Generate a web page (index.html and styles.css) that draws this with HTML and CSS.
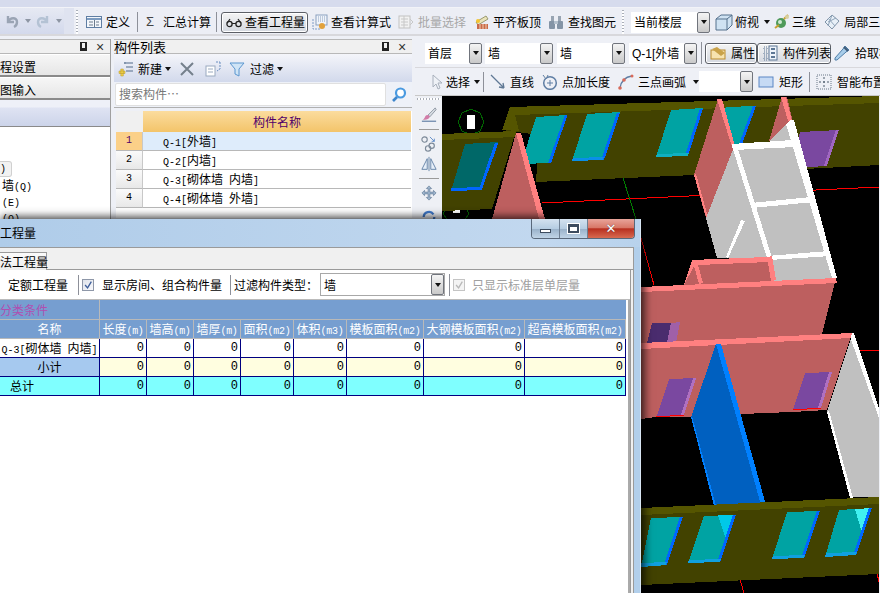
FILE: index.html
```html
<!DOCTYPE html>
<html lang="zh">
<head>
<meta charset="utf-8">
<title>工程量</title>
<link rel="stylesheet" href="styles.css">
</head>
<body>
<div class="app">
  <div class="menubar"><span class="menutext">文件 编辑 工程 楼层 构件 绘图 修改 视图 工具 云应用 帮助 版本号 新建变更 广小二</span></div>

  <div class="toolbar main-tb">
    <div class="quick">
      <svg class="ic" viewBox="0 0 16 16"><path d="M4 3v6h6M4 9c2-5 9-5 9 0 0 2-1 4-3 5" fill="none" stroke="#9aa4b4" stroke-width="2.4"/></svg>
      <i class="caret gray c1"></i>
      <svg class="ic" viewBox="0 0 16 16"><path d="M12 3v6H6M12 9c-2-5-9-5-9 0 0 2 1 4 3 5" fill="none" stroke="#b4c2d4" stroke-width="2.4"/></svg>
      <i class="caret gray c1"></i>
    </div>
    <i class="grip g1"></i>
    <div class="tool t-def">
      <svg class="ic" viewBox="0 0 16 16"><rect x=".5" y="2.500" width="15" height="11" fill="#f4f7fb" stroke="#5f7ea3"/><path d="M1 5h14" stroke="#7d9cc0" stroke-width="2"/><path d="M3 8h4M3 11h4M10 8h3M10 11h3M8.500 6v7" stroke="#6b7a8c"/></svg>
      <span>定义</span>
    </div>
    <i class="sep s1"></i>
    <div class="tool t-sum"><span class="sigma">Σ</span><span>汇总计算</span></div>
    <i class="sep s2"></i>
    <div class="tool active">
      <svg class="ic" viewBox="0 0 16 16"><circle cx="3.500" cy="10" r="2.600" fill="none" stroke="#222" stroke-width="1.300"/><circle cx="12.500" cy="10" r="2.600" fill="none" stroke="#222" stroke-width="1.300"/><path d="M6 9.500h4M1.200 9L4 5M14.800 9L12 5" fill="none" stroke="#222" stroke-width="1.200"/></svg>
      <span>查看工程量</span>
    </div>
    <div class="tool t-calc">
      <svg class="ic" viewBox="0 0 16 16"><rect x="4" y="1" width="11" height="10" fill="#f0f4fa" stroke="#8aa0c0"/><path d="M6 3h7M6 5h7M6 7h7" stroke="#8aa0c0" stroke-dasharray="1 1"/><path d="M1 5v10h8" fill="none" stroke="#7f9cc6" stroke-dasharray="2 1"/><circle cx="10" cy="12" r="3" fill="#e2a23c"/></svg>
      <span>查看计算式</span>
    </div>
    <div class="tool t-batch disabled">
      <svg class="ic" viewBox="0 0 16 16"><rect x="1" y="2" width="11" height="12" fill="#f2f2f2" stroke="#c2c2c2"/><path d="M3 5h7M3 8h7M3 11h7M6 2v12M12 5l3 3-3 3" fill="none" stroke="#c8c8c8"/></svg>
      <span>批量选择</span>
    </div>
    <div class="tool t-flat">
      <svg class="ic" viewBox="0 0 16 16"><path d="M2 8l10-6 2 3L4 11z" fill="#e9e3b9" stroke="#9a9a70"/><rect x="3" y="10" width="11" height="5" fill="#c96a4a"/><path d="M6 10v5M9 10v5M12 10v5" stroke="#f0d0b0"/><circle cx="4" cy="7" r="2" fill="#f4c430"/></svg>
      <span>平齐板顶</span>
    </div>
    <div class="tool t-find">
      <svg class="ic" viewBox="0 0 16 16"><path d="M3 2h3v5H3zM10 2h3v5h-3z" fill="#98a4b2"/><rect x="1" y="7" width="6" height="8" rx="1" fill="#8494a6"/><rect x="9" y="7" width="6" height="8" rx="1" fill="#8494a6"/><path d="M6 7h4v3H6z" fill="#b4c0cc"/></svg>
      <span>查找图元</span>
    </div>
    <i class="grip g2"></i>
    <div class="combo floor"><span class="val">当前楼层</span><b class="drop"><i class="caret"></i></b></div>
    <div class="tool t-top">
      <svg class="ic big" viewBox="0 0 18 18"><path d="M1 6l5-4h11v10l-5 5H1z" fill="#cfe2f2" stroke="#54708c"/><path d="M1 6h11v11M12 6l5-4" fill="none" stroke="#54708c"/></svg>
      <span>俯视</span><i class="caret c2"></i>
    </div>
    <div class="tool t-3d">
      <svg class="ic" viewBox="0 0 16 16"><circle cx="7" cy="9" r="5" fill="#4f9a5a"/><circle cx="6" cy="8" r="2" fill="#cfe8d2"/><path d="M1 14l4-3M10 5l4-4" stroke="#c8a030" stroke-width="2"/><circle cx="13" cy="3" r="2" fill="#d8d0a0"/></svg>
      <span>三维</span>
    </div>
    <div class="tool t-local">
      <svg class="ic" viewBox="0 0 16 16"><path d="M8 1l7 6-7 8-7-7z" fill="#e8f0f8" stroke="#7f93a8"/><path d="M4 4l7 8M8 1l-4 11M12 4l-8 4" stroke="#8fa3b8" fill="none"/></svg>
      <span>局部三维</span>
    </div>
  </div>

  <div class="workspace">
    <aside class="leftpanel">
      <div class="panelhead end"><i class="pin"></i><i class="close">×</i></div>
      <button class="navbtn">程设置</button>
      <button class="navbtn">图输入</button>
      <div class="band"></div>
      <div class="tree">
        <div class="tree-sel lat">)</div>
        <div class="tree-row">墙<span class="lat">(Q)</span></div>
        <div class="tree-row"><span class="lat">(E)</span></div>
        <div class="tree-row"><span class="lat">(O)</span></div>
      </div>
    </aside>

    <section class="listpanel">
      <div class="panelhead"><span class="paneltitle">构件列表</span><i class="pin push"></i><i class="close">×</i></div>
      <div class="listtools">
        <svg class="ic" viewBox="0 0 16 16"><path d="M8 2h7M8 6h7M8 10h7" stroke="#8294ad" stroke-width="1.300"/><rect x="6" y="1" width="2" height="2" fill="#8294ad"/><path d="M1 10h6v2.500H1z M2.800 8h2.500v7H2.800z" fill="#f1d24a" stroke="#b6942a" stroke-width=".5"/></svg>
        <span class="lt-new">新建</span><i class="caret c3"></i>
        <svg class="ic lt-x" viewBox="0 0 16 16"><path d="M2 2l12 12M14 2L2 14" stroke="#75808c" stroke-width="2"/></svg>
        <svg class="ic lt-copy" viewBox="0 0 16 16"><rect x="1" y="5" width="9" height="10" fill="#fff" stroke="#9aaabf"/><path d="M3 8h5M3 11h5" stroke="#9aaabf"/><path d="M11 1h4M15 1v7l-3 2" fill="none" stroke="#6a8ec0" stroke-dasharray="2 1"/></svg>
        <svg class="ic lt-filter" viewBox="0 0 16 16"><path d="M1 2h14L10 8v7l-4-2V8z" fill="#cfe4f6" stroke="#5b96cf"/></svg>
        <span class="lt-flt">过滤</span><i class="caret c3"></i>
      </div>
      <div class="searchrow">
        <div class="search">搜索构件…</div>
        <svg class="ic searchic" viewBox="0 0 16 16"><circle cx="9.500" cy="6" r="4.500" fill="#fff" stroke="#4a9ae0" stroke-width="2.200"/><path d="M6 10l-4 4" stroke="#3e86cc" stroke-width="2.600"/></svg>
      </div>
      <div class="listtable">
        <div class="lt-corner"></div><div class="lt-head">构件名称</div>
        <div class="lt-num sel">1</div><div class="lt-name sel"><span class="lat">Q-1[</span>外墙<span class="lat">]</span></div>
        <div class="lt-num">2</div><div class="lt-name"><span class="lat">Q-2[</span>内墙<span class="lat">]</span></div>
        <div class="lt-num">3</div><div class="lt-name"><span class="lat">Q-3[</span>砌体墙<span class="lat"> </span>内墙<span class="lat">]</span></div>
        <div class="lt-num">4</div><div class="lt-name"><span class="lat">Q-4[</span>砌体墙<span class="lat"> </span>外墙<span class="lat">]</span></div>
      </div>
    </section>

    <section class="viewarea">
      <div class="toolbar row2">
        <div class="combo c-floor"><span class="val">首层</span><b class="drop"><i class="caret"></i></b></div>
        <div class="combo c-wall"><span class="val">墙</span><b class="drop"><i class="caret"></i></b></div>
        <div class="combo c-wall"><span class="val">墙</span><b class="drop"><i class="caret"></i></b></div>
        <div class="combo c-wall"><span class="val"><span class="lat2">Q-1[</span>外墙</span><b class="drop"><i class="caret"></i></b></div>
        <i class="sep s3"></i>
        <div class="tool active a-prop">
          <svg class="ic" viewBox="0 0 16 16"><rect x="1" y="5" width="14" height="9" fill="#f7e3b0" stroke="#b98a2f"/><path d="M2 4l5-2 8 6-4 3z" fill="#c9a24a"/></svg>
          <span>属性</span>
        </div>
        <div class="tool active a-list">
          <svg class="ic" viewBox="0 0 16 16"><path d="M2 2h3v3H2zM2 7h3v3H2zM2 12h3v3H2z" fill="none" stroke="#5d7795" stroke-dasharray="1 1"/><rect x="7" y="1" width="8" height="14" fill="#eef3fa" stroke="#5d7795"/><path d="M9 4h4M9 8h4M9 12h4" stroke="#5d7795" stroke-width="2"/></svg>
          <span>构件列表</span>
        </div>
        <div class="tool a-pick">
          <svg class="ic" viewBox="0 0 16 16"><path d="M11 1l4 4-3 2-9 8H1v-2l8-9z" fill="#a8cdea" stroke="#4f7ea8"/><path d="M10 2l4 4" stroke="#3d5a78" stroke-width="2"/></svg>
          <span>拾取构件</span>
        </div>
      </div>
      <div class="toolbar row3">
        <svg class="ic r-cursor" viewBox="0 0 16 16"><path d="M4 1v12l3-3 2 5 2-1-2-5h4z" fill="#eef1f6" stroke="#a8b0bc"/></svg>
        <span class="r-sel">选择</span><i class="caret c4"></i>
        <i class="sep s4"></i>
        <div class="tool r-t1">
          <svg class="ic" viewBox="0 0 16 16"><path d="M1 1l13 13M14 14l-5-1M14 14l-1-5" fill="none" stroke="#5f7894" stroke-width="1.300"/></svg>
          <span>直线</span>
        </div>
        <div class="tool r-t2">
          <svg class="ic" viewBox="0 0 16 16"><circle cx="8" cy="9" r="6.300" fill="none" stroke="#5f7ea4" stroke-width="1.500"/><path d="M8 6v6M5 9h6" stroke="#5f7ea4"/><path d="M1 1l3 4 2-4" fill="#f0f0f0" stroke="#5f7ea4"/></svg>
          <span>点加长度</span>
        </div>
        <div class="tool r-t3">
          <svg class="ic" viewBox="0 0 16 16"><path d="M2 14C3 7 7 3 14 2" fill="none" stroke="#5f7ea4" stroke-width="1.300"/><circle cx="2" cy="14" r="1.800" fill="#d86a5a"/><circle cx="6" cy="6" r="1.800" fill="#d86a5a"/><circle cx="14" cy="2" r="1.500" fill="#d86a5a"/></svg>
          <span>三点画弧</span><i class="caret c5"></i>
        </div>
        <div class="combo c-blank"><span class="val"></span><b class="drop"><i class="caret"></i></b></div>
        <div class="tool r-t4">
          <svg class="ic" viewBox="0 0 16 16"><rect x="1" y="3" width="14" height="10" fill="#c6daf4" stroke="#5a86c4"/></svg>
          <span>矩形</span>
        </div>
        <i class="sep s5"></i>
        <div class="tool r-t5">
          <svg class="ic" viewBox="0 0 16 16"><rect x="1" y="1" width="14" height="14" fill="none" stroke="#6a7888" stroke-dasharray="1 1"/><path d="M8 3v10M3 8h10" stroke="#4a5a6a" stroke-dasharray="2 2"/></svg>
          <span>智能布置</span>
        </div>
      </div>

      <div class="stage">
        <div class="sidetools">
          <i class="grip-h"></i>
          <svg class="ic" viewBox="0 0 18 18"><path d="M1 16h16" stroke="#5f7ea4" stroke-width="1.300"/><path d="M16 1L8 9l2 2 7-8z" fill="#d8dde4" stroke="#8a939e"/><path d="M5 10c2-2 4-1 5 1-1 3-5 4-8 3 2-1 2-2 3-4z" fill="#d27ca8"/></svg>
          <i class="side-sep"></i>
          <svg class="ic" viewBox="0 0 18 18"><circle cx="4" cy="4" r="3" fill="none" stroke="#7d8a99" stroke-width="1.300"/><circle cx="12" cy="11" r="3" fill="none" stroke="#7d8a99" stroke-width="1.300"/><circle cx="8" cy="14" r="3" fill="none" stroke="#7d8a99" stroke-width="1.300"/><path d="M10 1l5 5M15 3v3h-3" fill="none" stroke="#5a86c4"/></svg>
          <svg class="ic" viewBox="0 0 18 18"><path d="M9 1v16" stroke="#5f7ea4"/><path d="M7 3v12H1zM11 3v12h6z" fill="#e6eef8" stroke="#5f7ea4"/></svg>
          <i class="side-sep"></i>
          <svg class="ic" viewBox="0 0 18 18"><path d="M9 1l3 3h-2v4h4V6l3 3-3 3v-2h-4v4h2l-3 3-3-3h2v-4H4v2L1 9l3-3v2h4V4H6z" fill="#9db4cc" stroke="#5f7894" stroke-width=".7"/></svg>
          <svg class="ic side-rot" viewBox="0 0 18 18"><path d="M3 9a6 6 0 0 1 11-3M15 9a6 6 0 0 1-11 3" fill="none" stroke="#3f78c8" stroke-width="2.500"/></svg>
        </div>

        <svg class="scene" viewBox="443 96 437 497" preserveAspectRatio="none">
          <g fill="none" stroke-width="1">
            <path d="M543 203L880 187M642 238L655 285M860 350H880M741 579L745 593M878 573L880 582" stroke="#ff0000"/>
            <path d="M624 178L637 219" stroke="#008000"/>
            <path d="M472 109l9 4 4 9-4 9-9 4-9-4-4-9 4-9zM457 202l9 4 4 8-4 5H448l-4-5 4-8z" stroke="#006400"/>
          </g>
          <rect x="468" y="115" width="8" height="14" fill="#fff"/>
          <rect x="454" y="210" width="7" height="3" fill="#fff"/>

          <path d="M503 130L511 107 880 96V165L695 175 537 182 540 135z" fill="#424200"/>
          <path d="M511 107L880 96V103L516 115z" fill="#555500"/>
          <path d="M503 130L511 107 516 115 520 131z" fill="#555500"/>
          <path d="M537 117L568 115 552 163 522 164z" fill="#00a3a3"/>
          <path d="M566 115h2.500L552 163h-3z" fill="#0066ff"/>
          <path d="M588 114L621 112 605 160 573 161z" fill="#00a3a3"/>
          <path d="M618 112.500h3L605 160h-3z" fill="#0066ff"/>
          <path d="M574 158l31-1-1 3-31 1z" fill="#0a8fe8"/>
          <path d="M672 110L704 108 689 156 657 157z" fill="#00a3a3"/>
          <path d="M701 108.500h3L689 156h-3z" fill="#0066ff"/>
          <path d="M658 154l32-1-1 3-32 1z" fill="#10b0c0"/>
          <path d="M727 107L757 106 742 147 710 150z" fill="#00a3a3"/>
          <path d="M754 106h3L742 147h-3z" fill="#0066ff"/>
          <path d="M801 132L840 130 828 166 790 168z" fill="#7a48a0"/>
          <path d="M837 130h3L828 166h-3z" fill="#a066c0"/>

          <path d="M443 134L517 131 493 209 443 211z" fill="#424200"/>
          <path d="M443 134L517 131 517 137 443 140z" fill="#555500"/>
          <path d="M466 144L499 142 483 189 452 191z" fill="#006868"/>
          <path d="M496 142.500h3.500L483 189h-3z" fill="#0066ff"/>
          <path d="M452 188l32-1-1 3-31 1z" fill="#0066ff"/>

          <path d="M517 133h5L546 219H493z" fill="#bd5f5f"/>
          <path d="M517 133h5L546 219h-6z" fill="#ff8080"/>

          <path d="M783 97L788 97 794 122 794 141 770 141z" fill="#bd5f5f"/>
          <path d="M782 97h5l6 24h-4z" fill="#ff8080"/>
          <path d="M719 99L695 175 707 218 735 147z" fill="#bd5f5f"/>
          <path d="M718 99h5L736 146 733 147zM695 175l2-1 12 43h-2z" fill="#ff8080"/>

          <path d="M770 141L792 120 797 141z" fill="#c0c0c0"/>
          <path d="M735 147L707 218 718 258 772 258z" fill="#c0c0c0"/>
          <path d="M735 147L793 140 838 278 772 284z" fill="#c0c0c0"/>
          <path d="M733 144L793 140 796 147 735 150z" fill="#fff"/>
          <path d="M792 120L795 120 838 278 833 278 787 124z" fill="#fff"/>
          <path d="M733 146L738 146 773 258 768 258z" fill="#fff"/>
          <path d="M752 203L812 197 815 202 753 208z" fill="#fff"/>
          <path d="M768 256L830 251 832 256 770 260z" fill="#fff"/>
          <path d="M742 220L746 221 729 258 727 257z" fill="#fff"/>

          <path d="M685 285L693 260 768 257 775 281z" fill="#bd5f5f"/>
          <path d="M685 285L693 260 768 257 770 262 699 265 704 283 700 284 695 266z" fill="#ff8080"/>
          <path d="M768 257L773 256 777 280 772 281z" fill="#ff8080"/>

          <path d="M642 287L837 278 822 338 642 345z" fill="#bd5f5f"/>
          <path d="M642 287L837 278 838 283 642 292z" fill="#ff8080"/>
          <path d="M653 323L672 323 668 343 648 343z" fill="#4a2c6e"/>
          <path d="M672 323L681 322 677 343 668 343z" fill="#a060a8"/>

          <path d="M853 335L880 413V497H852L828 412z" fill="#c0c0c0"/>
          <path d="M850 334L855 333 880 408V418z" fill="#fff"/>
          <path d="M828 412l2-1 24 87h-3z" fill="#fff"/>

          <path d="M642 343L853 333 828 410 793 412 742 414 691 417 657 417 642 419z" fill="#bd5f5f"/>
          <path d="M642 343L853 333 852 338 642 349z" fill="#ff8080"/>
          <path d="M670 379L697 378 685 415 658 416z" fill="#7a48a0"/>
          <path d="M694 378h3L685 415h-3z" fill="#b070c0"/>
          <path d="M806 373L833 372 822 408 794 410z" fill="#7a48a0"/>
          <path d="M830 372h3L822 408h-3z" fill="#b070c0"/>
          <path d="M657 417l28-2M794 410l28-2" stroke="#ff0000" fill="none"/>

          <path d="M717 344L722 344 767 505 716 506 692 417z" fill="#0060c0"/>
          <path d="M717 344L722 344 767 505 762 505z" fill="#0080ff"/>
          <path d="M692 417l1-1 24 90h-2z" fill="#0080ff"/>

          <path d="M642 508L880 497V574L642 585z" fill="#424200"/>
          <path d="M642 508L880 497V504L642 515z" fill="#555500"/>
          <path d="M652 518L684 517 668 565 642 567z" fill="#00a3a3"/>
          <path d="M681 517h3L668 565h-3z" fill="#0066ff"/>
          <path d="M642 563l26-1-1 3-25 2z" fill="#10a0e0"/>
          <path d="M705 516L737 515 721 562 689 563z" fill="#00a3a3"/>
          <path d="M719 515L737 515 727 540z" fill="#00c8e8"/>
          <path d="M734 515h3L721 562h-3z" fill="#0066ff"/>
          <path d="M690 560l32-1-1 3-32 1z" fill="#10a0e0"/>
          <path d="M788 512L821 511 805 558 773 559z" fill="#00a3a3"/>
          <path d="M818 511h3L805 558h-3z" fill="#0066ff"/>
          <path d="M774 556l32-1-1 3-32 1z" fill="#10a0e0"/>
          <path d="M840 510L873 508 857 555 826 557z" fill="#00a3a3"/>
          <path d="M856 509L873 508 863 533z" fill="#40f0f0"/>
          <path d="M870 508h3L857 555h-3z" fill="#0066ff"/>
          <path d="M827 553l31-1-1 3-31 2z" fill="#10a0e0"/>
        </svg>
      </div>
    </section>
  </div>

  <div class="dialog">
    <div class="titlebar">
      <span class="dtitle">工程量</span>
      <div class="winctl">
        <b class="wbtn"><i class="w-min"></i></b>
        <b class="wbtn"><i class="w-max"></i></b>
        <b class="wbtn w-close">✕</b>
      </div>
    </div>
    <div class="dbody">
      <div class="tabstrip"><span class="tab">法工程量</span></div>
      <div class="dpanel">
        <div class="dtools">
          <span class="dt-quota">定额工程量</span>
          <i class="sep dsep"></i>
          <i class="check"><svg viewBox="0 0 12 12"><path d="M2.500 6l3 3.500L10 2" fill="none" stroke="#3f5f9a" stroke-width="1.600"/></svg></i>
          <span class="dt-room">显示房间、组合构件量</span>
          <i class="sep dsep b"></i>
          <span class="dt-filter">过滤构件类型：</span>
          <div class="combo d-combo"><span class="val">墙</span><b class="drop"><i class="caret"></i></b></div>
          <i class="sep dsep2"></i>
          <i class="check off"><svg viewBox="0 0 12 12"><path d="M2.500 6l3 3.500L10 2" fill="none" stroke="#b8b8b8" stroke-width="1.600"/></svg></i>
          <span class="dt-std">只显示标准层单层量</span>
        </div>
        <div class="gridwrap">
          <div class="grid">
            <div class="g-group g-first">分类条件</div><div class="g-group g-rest"></div>
            <div class="g-head">名称</div>
            <div class="g-head">长度<span class="lat">(m)</span></div>
            <div class="g-head">墙高<span class="lat">(m)</span></div>
            <div class="g-head">墙厚<span class="lat">(m)</span></div>
            <div class="g-head">面积<span class="lat">(m2)</span></div>
            <div class="g-head">体积<span class="lat">(m3)</span></div>
            <div class="g-head">模板面积<span class="lat">(m2)</span></div>
            <div class="g-head">大钢模板面积<span class="lat">(m2)</span></div>
            <div class="g-head">超高模板面积<span class="lat">(m2)</span></div>

            <div class="g-name"><span class="lat">Q-3[</span>砌体墙<span class="lat"> </span>内墙<span class="lat">]</span></div>
            <div class="g-val">0</div><div class="g-val">0</div><div class="g-val">0</div><div class="g-val">0</div><div class="g-val">0</div><div class="g-val">0</div><div class="g-val">0</div><div class="g-val">0</div>

            <div class="g-name sub">小计</div>
            <div class="g-val y">0</div><div class="g-val y">0</div><div class="g-val y">0</div><div class="g-val y">0</div><div class="g-val y">0</div><div class="g-val y">0</div><div class="g-val y">0</div><div class="g-val y">0</div>

            <div class="g-name total">总计</div>
            <div class="g-val c">0</div><div class="g-val c">0</div><div class="g-val c">0</div><div class="g-val c">0</div><div class="g-val c">0</div><div class="g-val c">0</div><div class="g-val c">0</div><div class="g-val c">0</div>
          </div>
          <i class="scrollline"></i>
        </div>
      </div>
    </div>
  </div>
</div>
</body>
</html>
```

FILE: styles.css
```css
* { box-sizing: border-box; }
html, body { margin: 0; padding: 0; height: 100%; overflow: hidden; }
body { background: #f0f0f0; font: 12px/16px "Noto Sans CJK SC", "Liberation Sans", sans-serif; color: #000; }
i, b { font-style: normal; font-weight: normal; display: block; flex: none; }
span { white-space: nowrap; }
.lat { font-family: "Liberation Mono", monospace; font-size: 10px; }
.lat2 { font-family: "Liberation Sans", sans-serif; font-size: 12px; }

.app { position: relative; width: 880px; height: 593px; overflow: hidden; background: #eef0f6; }
.menubar { height: 8px; overflow: hidden; background: #d6dbed; border-bottom: 1px solid #f2f3f8; }
.menutext { display: block; margin: -14px 0 0 24px; white-space: pre; word-spacing: 18px; color: #333; }

.toolbar { display: flex; align-items: center; }
.main-tb { height: 28px; padding-top: 2px; background: linear-gradient(90deg, #dfe3f0 0, #dfe3f0 74px, #eceef5 74px); border-bottom: 2px solid #d8d8dc; white-space: nowrap; }
.quick { width: 64px; height: 26px; margin-top: -2px; display: flex; align-items: center; padding-left: 4px; background: linear-gradient(#e6e9f3, #d3d9ec); }
.ic { width: 16px; height: 16px; flex: none; display: block; }
.ic.big { width: 18px; height: 18px; }
.tool { display: flex; align-items: center; gap: 4px; flex: none; }
.disabled { color: #a8a8a8; }
.active { height: 21px; padding: 0 2px 0 4px; border: 1px solid #5c5f66; border-radius: 3px; background: linear-gradient(#f4f4f4, #d4d8e0); box-shadow: inset 0 0 0 1px #fff; }
.caret { width: 0; height: 0; border: 3.500px solid transparent; border-top: 4px solid #111; border-bottom: 0; }
.caret.gray { border-top-color: #8e96a4; }
.c1 { margin: 0 4px 0 5px; }
.c2 { margin-left: 3px; }
.c3 { margin-left: 3px; }
.c4 { margin-left: 4px; }
.c5 { margin-left: 3px; }
.grip { width: 2px; height: 24px; background: repeating-linear-gradient(#a9aeb8 0 1px, #fff 1px 3px); }
.g1 { margin-left: 12px; }
.g2 { margin-left: 6px; }
.sep { width: 1px; height: 20px; background: #8d9099; }
.t-def { margin-left: 8px; }
.s1 { margin-left: 7px; }
.t-sum { margin-left: 8px; gap: 7px; }
.sigma { width: 10px; font: 13px/16px "Liberation Sans", sans-serif; color: #444; }
.s2 { margin-left: 5px; }
.main-tb > .active { margin-left: 4px; width: 87px; gap: 3px; }
.t-calc { margin-left: 4px; gap: 3px; }
.t-batch { margin-left: 7px; }
.t-flat { margin-left: 8px; gap: 3px; }
.t-find { margin-left: 7px; }
.combo { display: flex; align-items: center; height: 21px; background: #fff; flex: none; }
.val { flex: 1; padding-left: 3px; white-space: nowrap; overflow: hidden; }
.drop { width: 13px; height: 21px; border: 1px solid #70747c; border-radius: 2px; background: linear-gradient(#f4f4f4, #c9c9c9); display: flex; align-items: center; justify-content: center; }
.floor { width: 79px; margin-left: 7px; }
.t-top { margin-left: 5px; gap: 2px; }
.t-3d { margin-left: 4px; gap: 2px; }
.t-local { margin-left: 8px; }

.workspace { display: flex; height: 557px; }
.leftpanel { width: 111px; margin-top: 3px; flex: none; border-right: 1px solid #a0a0a0; background: #f0f0f0; }
.panelhead { height: 15px; display: flex; align-items: center; background: #f0f0f0; border-top: 1px solid #b8b8b8; border-bottom: 1px solid #b8b8b8; }
.panelhead.end { justify-content: flex-end; }
.pin { width: 7px; height: 9px; margin-right: 9px; border: 2px solid #222; border-top-width: 1px; border-bottom-width: 3px; }
.close { width: 10px; margin-right: 4px; font: 14px/12px "Liberation Sans", sans-serif; color: #333; }
.push { margin-left: auto; }
.navbtn { display: block; width: 110px; height: 23px; padding: 3px 0 0; border: 0; border-top: 1px solid #fff; border-bottom: 2px solid #8a8a8a; background: linear-gradient(#f6f6f6, #e6e6e6); font: inherit; text-align: left; }
.band { height: 27px; background: linear-gradient(#eef0f8 0, #eef0f8 7px, #dfe3f3 8px, #ccd4ea); border-bottom: 1px solid #8a8a8a; }
.tree { background: #fff; height: 100px; padding-top: 34px; }
.tree-sel { width: 12px; height: 16px; border: 1px solid #d0d0d0; border-left: 0; border-radius: 0 3px 3px 0; background: #f2f2f2; }
.tree-row { height: 16px; padding-left: 2px; }

.listpanel { width: 298px; margin: 3px 0 0 3px; flex: none; }
.paneltitle { font-size: 13px; line-height: 13px; margin-top: -1px; }
.listtools { height: 28px; display: flex; align-items: center; padding: 2px 0 0 4px; background: linear-gradient(#f4f5fa, #d2d9ec); }
.lt-new { margin-left: 4px; }
.lt-x { margin-left: 8px; }
.lt-copy { margin-left: 10px; }
.lt-filter { margin-left: 8px; }
.lt-flt { margin-left: 5px; }
.searchrow { display: flex; align-items: center; height: 26px; border-bottom: 1px solid #b0b0b0; background: #eef1f8; padding: 0 4px 0 1px; }
.search { width: 271px; height: 23px; padding: 2px 0 0 3px; background: #fff; border: 1px solid #e0e0e0; border-radius: 2px; color: #777; }
.searchic { margin-left: 5px; }
.listtable { display: grid; grid-template-columns: 27px 268px; grid-template-rows: 21px repeat(4, 19px); margin: 3px 0 0 2px; height: 107px; align-content: start; background: #fff; }
.lt-corner { background: #f0f0f0; }
.lt-head { background: linear-gradient(#fbdc9e, #f3c46a); color: #50006a; text-align: center; line-height: 21px; }
.lt-num { background: linear-gradient(#fafafa, #e8e8e8); border-bottom: 1px solid #b8b8b8; border-right: 1px solid #c8c8c8; text-align: center; font: 10px/18px "Liberation Mono", monospace; }
.lt-name { padding-left: 20px; line-height: 18px; border-bottom: 1px solid #b8b8b8; background: #fff; }
.lt-num.sel { background: #fbd088; color: #50006a; }
.lt-name.sel { background: #deecfb; }

.viewarea { width: 466px; margin-left: 3px; flex: none; display: flex; flex-direction: column; min-width: 0; }
.row2 { height: 29px; margin-top: 3px; padding-left: 10px; border-bottom: 1px solid #d8d8dc; }
.c-floor { width: 57px; }
.c-wall { width: 68px; margin-left: 4px; }
.c-floor + .c-wall { margin-left: 3px; }
.s3 { margin-left: 4px; height: 22px; }
.a-prop { margin-left: 3px; width: 52px; gap: 5px; }
.a-list { width: 74px; gap: 5px; }
.a-pick { margin-left: 3px; gap: 5px; }
.row3 { height: 28px; padding-left: 14px; border-bottom: 1px solid #c8c8c8; }
.r-sel { margin-left: 1px; }
.s4 { margin-left: 3px; }
.r-t1 { margin-left: 6px; }
.r-t2 { margin-left: 8px; }
.r-t3 { margin-left: 8px; }
.c-blank { width: 54px; margin-left: 0; }
.r-t4 { margin-left: 5px; gap: 5px; }
.s5 { margin-left: 6px; }
.r-t5 { margin-left: 6px; gap: 5px; }

.stage { display: flex; flex: 1; min-height: 0; }
.sidetools { width: 27px; flex: none; display: flex; flex-direction: column; align-items: center; background: #eef0f5; padding-top: 2px; gap: 4px; }
.grip-h { width: 24px; height: 2px; background: repeating-linear-gradient(90deg, #a9aeb8 0 1px, #fff 1px 3px); margin-bottom: 3px; }
.side-sep { width: 20px; height: 1px; background: #9a9a9a; margin: 2px 0; }
.side-rot { margin-top: 4px; }
.scene { display: block; width: 437px; height: 497px; background: #000; shape-rendering: crispEdges; }

.dialog { position: absolute; left: 0; top: 219px; width: 641px; height: 380px; background: #b2cfeb; border-right: 1px solid #d8e6f4; box-shadow: 4px 0 8px rgba(0,0,0,.55), 0 -3px 8px rgba(0,0,0,.45); display: flex; flex-direction: column; }
.titlebar { height: 28px; flex: none; display: flex; align-items: flex-start; background: linear-gradient(90deg, #afcce9, #c2d8ef 85%, #b8d2ec); }
.dtitle { margin: 5px 0 0 0; line-height: 18px; }
.winctl { display: flex; height: 20px; margin-left: auto; margin-right: 5px; border: 1px solid #59687a; border-top: 0; border-radius: 0 0 4px 4px; overflow: hidden; }
.wbtn { width: 28px; display: flex; align-items: center; justify-content: center; background: linear-gradient(#d4e2f0, #b6cde2 50%, #98b0c8 51%, #c0d4e6); border-right: 1px solid #6e7f92; }
.w-min { width: 11px; height: 4px; margin-top: 4px; background: #fff; border: 1px solid #3d4c5e; }
.w-max { width: 11px; height: 9px; background: #fff; border: 2px solid #3d4c5e; border-top-width: 3px; box-shadow: 0 0 0 1px #fff; }
.w-close { width: 46px; border-right: 0; color: #fff; font: bold 13px/16px "DejaVu Sans", sans-serif; text-shadow: 0 0 1px #40202a; background: linear-gradient(#e8a49a, #d87868 45%, #b83020 52%, #d86a50); }
.dbody { flex: 1; min-height: 0; margin-right: 6px; background: #f0f0f0; border-top: 1px solid #9a9a9a; border-right: 1px solid #9a9a9a; padding-top: 4px; }
.tabstrip { height: 18px; border-bottom: 1px solid #9a9a9a; }
.tab { display: block; width: 47px; height: 18px; background: linear-gradient(#fbfbfb, #ececec); border: 1px solid #9a9a9a; border-left: 0; border-bottom: 0; line-height: 17px; text-align: right; padding-right: 1px; }
.dpanel { height: 330px; margin-right: 2px; background: #fff; border-right: 1px solid #9a9a9a; }
.dtools { display: flex; align-items: center; height: 30px; padding-left: 8px; border-bottom: 1px solid #bbb; }
.dsep { height: 20px; margin-left: 10px; }
.dsep.b { margin-left: 8px; }
.check { width: 12px; height: 12px; margin-left: 3px; border: 1px solid #8e97a8; background: linear-gradient(135deg, #dfe3ea, #f8f8fb); }
.check svg { display: block; width: 100%; height: 100%; }
.check.off { border-color: #c4c4c4; background: #f4f4f4; }
.dt-room { margin-left: 8px; }
.dt-filter { margin-left: 3px; }
.d-combo { width: 125px; height: 23px; margin-left: 2px; border: 1px solid #a8a8a8; }
.d-combo .drop { height: 21px; }
.dsep2 { height: 22px; margin-left: 4px; }
.dt-std { margin-left: 7px; color: #a0a0a0; }
.gridwrap { display: flex; height: 299px; }
.grid { display: grid; grid-template-columns: 100px 47px 47px 47px 53px 53px 77px 101px 101px; grid-template-rows: 20px repeat(4, 19px); width: 626px; height: 96px; background: #fff; flex: none; align-content: start; }
.g-group { background: #769ed0; border-bottom: 1px solid #b9b9b9; line-height: 20px; color: #b04fb0; }
.g-first { border-right: 1px solid #b9b9b9; }
.g-rest { grid-column: 2 / -1; }
.g-head { background: #769ed0; color: #fff; text-align: center; line-height: 18px; border-right: 1px solid #b9b9b9; border-bottom: 1px solid #b9b9b9; white-space: nowrap; overflow: hidden; }
.g-head .lat { letter-spacing: -.3px; }
.g-name { background: #fff; border-right: 1px solid #000080; border-bottom: 1px solid #000080; line-height: 18px; text-align: center; white-space: nowrap; overflow: hidden; }
.g-name.sub { background: #a6c9ef; }
.g-name.total { background: #7fffff; text-align: left; padding-left: 10px; }
.g-val { background: #fff; border-right: 1px solid #000080; border-bottom: 1px solid #000080; font: 12px/18px "Liberation Mono", monospace; text-align: right; padding-right: 2px; }
.g-val.y { background: #fffee0; }
.g-val.c { background: #7fffff; }
.scrollline { width: 2px; height: 100%; margin-left: 2px; background: #aaa; }
```
